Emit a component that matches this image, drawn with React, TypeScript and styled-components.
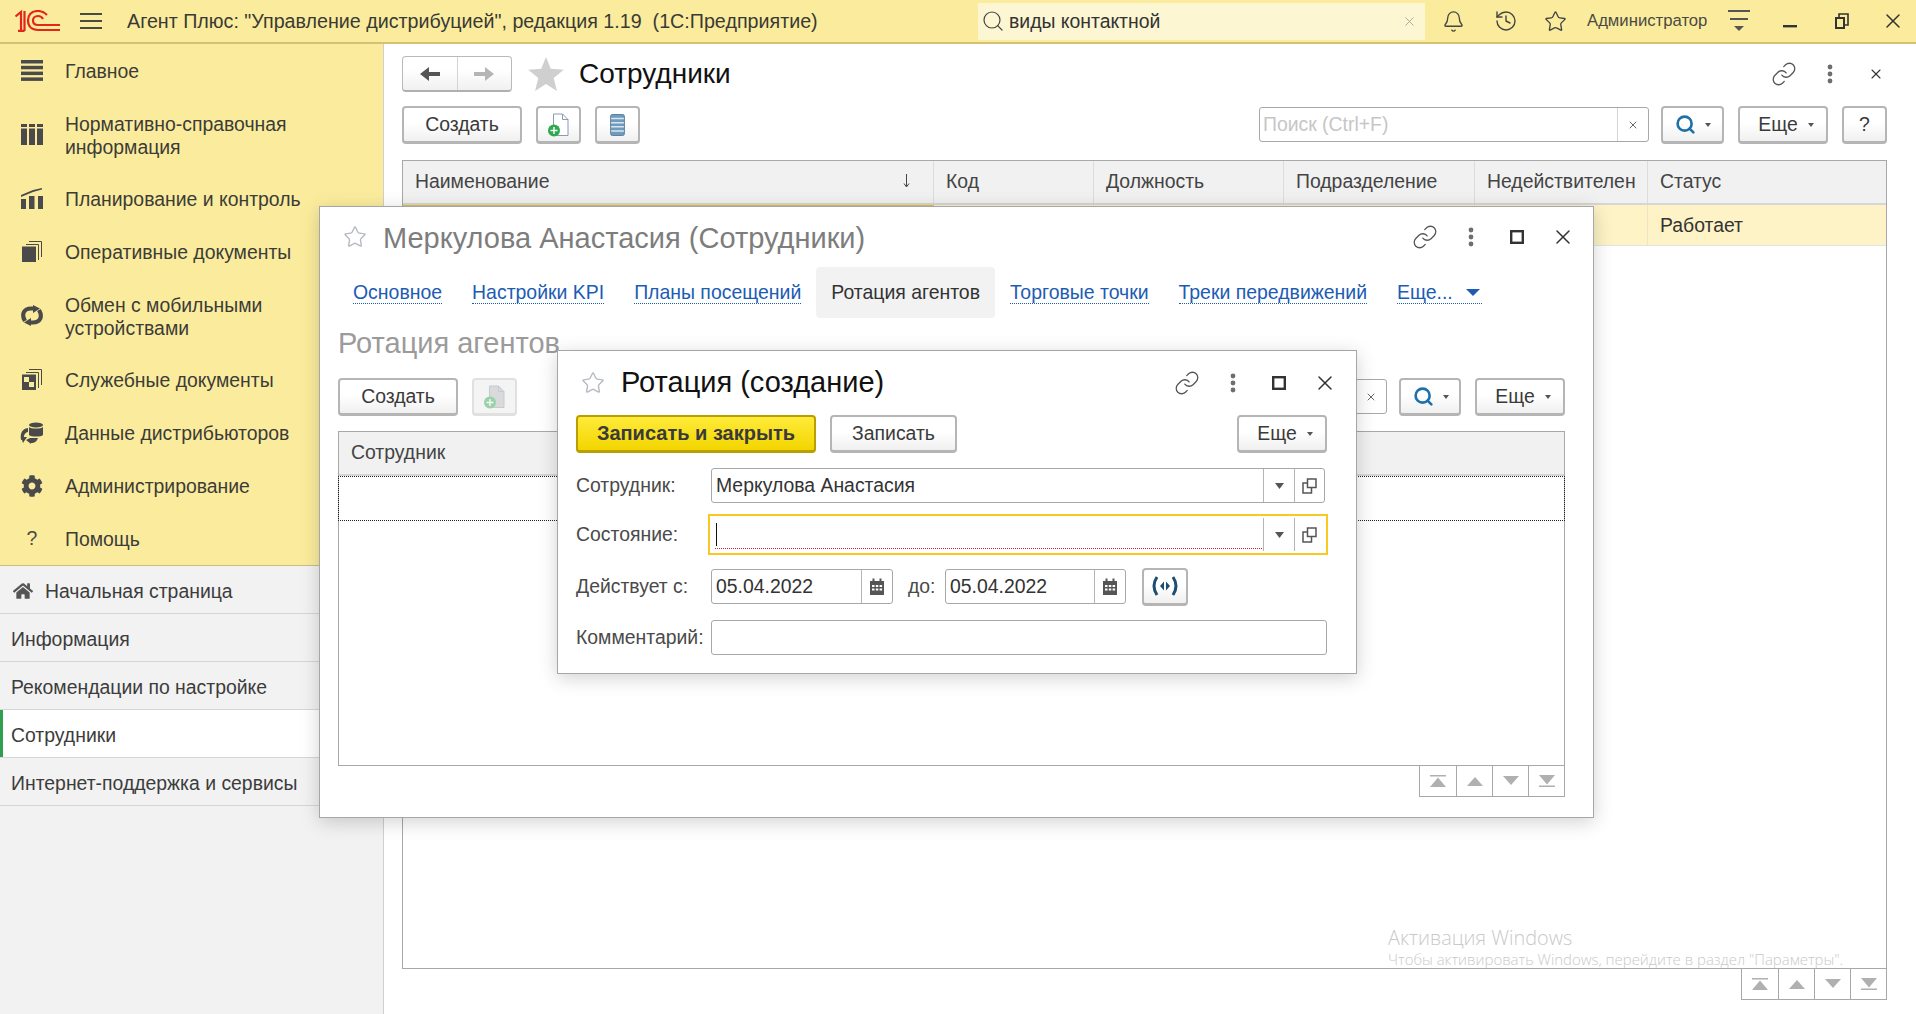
import React from 'react';
import styled, { createGlobalStyle } from 'styled-components';
import { Bell, History, Star, Link as LinkIcon, Search, X } from 'lucide-react';
import { FaCog, FaHome } from 'react-icons/fa';

const GlobalStyle = createGlobalStyle`
    html, body {
        margin: 0;
        padding: 0;
        background: #fff;
        overflow: hidden;
    }
    * {
        box-sizing: border-box;
    }
    #root {
        width: 1916px;
        height: 1014px;
    }
`;

const Page = styled.div`
    position: relative;
    width: 1916px;
    height: 1014px;
    overflow: hidden;
    display: flex;
    flex-direction: column;
    background: #fff;
    color: #333;
    font-family: "Liberation Sans", Arial, sans-serif;
    font-size: 19.4px;
`;

/* ---------- top bar ---------- */

const TopBar = styled.header`
    flex: 0 0 44px;
    display: flex;
    align-items: center;
    background: #fbec9d;
    border-bottom: 2px solid #d6c170;
    padding-left: 15px;
`;

const Burger = styled.div`
    width: 22px;
    height: 16px;
    margin-left: 20px;
    border-top: 2px solid #4a4a44;
    border-bottom: 2px solid #4a4a44;
    position: relative;
    &::after {
        content: "";
        position: absolute;
        left: 0;
        right: 0;
        top: 5px;
        height: 2px;
        background: #4a4a44;
    }
`;

const AppTitle = styled.div`
    flex: 0 0 876px;
    padding-left: 25px;
    white-space: pre;
    font-size: 19.7px;
    color: #3a3a34;
`;

const GlobalSearch = styled.div`
    flex: 0 0 447px;
    height: 37px;
    display: flex;
    align-items: center;
    background: #fdf6d2;
    padding: 0 8px 0 3px;
    gap: 4px;
    color: #333;
`;

const GlobalSearchText = styled.span`
    flex: 1;
`;

const TopSlot = styled.div<{ $w: number; $shift?: number }>`
    flex: 0 0 ${(p) => p.$w}px;
    padding-left: ${(p) => p.$shift ?? 0}px;
    display: flex;
    align-items: center;
    justify-content: center;
    color: #444;
`;

const UserName = styled.div`
    flex: 0 0 140px;
    padding-left: 8px;
    font-size: 16.7px;
    color: #4a4a44;
`;

/* ---------- side panel ---------- */

const Body = styled.div`
    flex: 1;
    display: flex;
    min-height: 0;
`;

const Side = styled.aside`
    flex: 0 0 384px;
    display: flex;
    flex-direction: column;
    background: #f2f2f2;
    border-right: 1px solid #cfcfcf;
`;

const SideMenu = styled.nav`
    background: #fbec9d;
    border-bottom: 1px solid #c9bd8a;
`;

const SideItem = styled.div<{ $tall?: boolean }>`
    height: ${(p) => (p.$tall ? 75 : 53)}px;
    display: flex;
    align-items: center;
    color: #3c3c38;
    line-height: 23px;
`;

const SideIcon = styled.div`
    flex: 0 0 65px;
    display: flex;
    justify-content: center;
    padding-right: 1px;
    color: #4a4a4a;
`;

const SideLabel = styled.div`
    padding-top: 2px;
`;

const OpenTab = styled.div<{ $active?: boolean }>`
    height: 48px;
    display: flex;
    align-items: center;
    gap: 12px;
    padding: 3px 0 0 11px;
    color: #3c3c3c;
    border-bottom: 1px solid #d6d6d6;
    background: ${(p) => (p.$active ? '#fff' : 'transparent')};
    box-shadow: ${(p) => (p.$active ? 'inset 3px 0 0 #2f9e4f' : 'none')};
`;

const HomeMark = styled.span`
    display: flex;
    margin-left: 2px;
    color: #555;
`;

/* ---------- main form ---------- */

const Main = styled.main`
    flex: 1;
    min-width: 0;
    display: flex;
    flex-direction: column;
    padding: 12px 29px 14px 18px;
`;

const FormHead = styled.div`
    display: flex;
    align-items: center;
    height: 36px;
`;

const NavGroup = styled.div`
    display: flex;
    width: 110px;
    height: 36px;
    border: 1px solid #b9b9b9;
    border-bottom: 2px solid #b0b0b0;
    border-radius: 4px;
    background: linear-gradient(#fff 40%, #f0f0f0);
`;

const NavCell = styled.div<{ $line?: boolean }>`
    flex: 1;
    display: flex;
    align-items: center;
    justify-content: center;
    border-left: ${(p) => (p.$line ? '1px solid #d4d4d4' : 'none')};
`;

const BigStar = styled.div`
    margin-left: 16px;
    width: 36px;
    display: flex;
    justify-content: center;
`;

const MainTitle = styled.div`
    margin-left: 15px;
    font-size: 28px;
    color: #111;
`;

const Controls = styled.div<{ $out: number }>`
    margin-left: auto;
    margin-right: -${(p) => p.$out}px;
    display: flex;
    align-items: center;
`;

const ControlSlot = styled.div`
    width: 46px;
    height: 30px;
    display: flex;
    align-items: center;
    justify-content: center;
    color: #555;
`;

const Toolbar = styled.div<{ $top: number }>`
    margin-top: ${(p) => p.$top}px;
    display: flex;
    align-items: center;
    gap: 14px;
    height: 38px;
`;

const Button = styled.div<{ $w: number; $primary?: boolean; $off?: boolean }>`
    flex: 0 0 ${(p) => p.$w}px;
    height: 38px;
    display: flex;
    align-items: center;
    justify-content: center;
    gap: 9px;
    border-radius: 4px;
    border: 2px solid ${(p) => (p.$primary ? '#b99f00' : p.$off ? '#e0e0e0' : '#b5b5b5')};
    border-bottom-width: 3px;
    background: ${(p) =>
        p.$primary
            ? 'linear-gradient(#ffeb3a, #f2d500)'
            : p.$off
              ? '#f4f4f4'
              : 'linear-gradient(#fff 45%, #f0f0f0)'};
    color: #3a3a3a;
    font-weight: ${(p) => (p.$primary ? 700 : 400)};
    font-size: ${(p) => (p.$primary ? 20 : 19.4)}px;
`;

const MoreButton = styled(Button)`
    padding-left: 6px;
    gap: 10px;
`;

const LensButton = styled(Button)`
    gap: 9px;
    padding-left: 1px;
`;

const Caret = styled.span`
    width: 0;
    height: 0;
    border-left: 3.5px solid transparent;
    border-right: 3.5px solid transparent;
    border-top: 4px solid #555;
`;

const ListSearch = styled.div<{ $w: number }>`
    flex: 0 0 ${(p) => p.$w}px;
    height: 35px;
    display: flex;
    align-items: center;
    border: 1px solid #a8a8a8;
    border-radius: 3px;
    background: #fff;
    color: #c6c6c6;
    margin: 0 -2px 1px 0;
`;

const ListSearchText = styled.div`
    flex: 1;
    padding-left: 3px;
`;

const ListSearchClear = styled.div`
    flex: 0 0 31px;
    height: 100%;
    display: flex;
    align-items: center;
    justify-content: center;
    border-left: 1px solid #d4d4d4;
    color: #555;
`;

const Spacer = styled.div`
    flex: 1;
`;

/* ---------- tables ---------- */

const Table = styled.div<{ $top: number }>`
    margin-top: ${(p) => p.$top}px;
    flex: 1;
    min-height: 0;
    border: 1px solid #a8a8a8;
    display: flex;
    flex-direction: column;
`;

const HeadRow = styled.div<{ $cols: string }>`
    flex: 0 0 44px;
    display: grid;
    grid-template-columns: ${(p) => p.$cols};
    background: #f1f1f1;
    border-bottom: 2px solid #d6d6d6;
`;

const HeadCell = styled.div`
    display: flex;
    align-items: center;
    justify-content: space-between;
    padding: 0 22px 2px 12px;
    border-right: 1px solid #dcdcdc;
    color: #444;
    white-space: nowrap;
    overflow: hidden;
    &:last-child {
        border-right: none;
    }
`;

const DataRow = styled.div<{ $cols: string }>`
    flex: 0 0 41px;
    display: grid;
    grid-template-columns: ${(p) => p.$cols};
    background: #fdf3c6;
    border-bottom: 1px solid #e4e4e4;
`;

const DataCell = styled.div`
    display: flex;
    align-items: center;
    padding: 0 12px;
    border-right: 1px solid #ece6c4;
    color: #333;
    &:first-child {
        border-top: 2px solid #e7bf3a;
    }
    &:last-child {
        border-right: none;
    }
`;

const EmptyRow = styled.div`
    flex: 0 0 45px;
    border: 1px dotted #222;
    margin: 0 -1px;
`;

const Pager = styled.div`
    align-self: flex-end;
    display: flex;
    height: 31px;
    border: 1px solid #a8a8a8;
    border-top: none;
    background: #fff;
`;

const PagerCell = styled.div`
    width: 36px;
    display: flex;
    align-items: center;
    justify-content: center;
    border-left: 1px solid #a8a8a8;
    &:first-child {
        border-left: none;
    }
`;

/* ---------- floating windows ---------- */

const Win = styled.section<{ $x: number; $y: number; $w: number; $h: number; $pad: number; $padR: number }>`
    position: absolute;
    left: ${(p) => p.$x}px;
    top: ${(p) => p.$y}px;
    width: ${(p) => p.$w}px;
    height: ${(p) => p.$h}px;
    padding: 0 ${(p) => p.$padR}px 20px ${(p) => p.$pad}px;
    display: flex;
    flex-direction: column;
    background: #fff;
    border: 1px solid #a6a6a6;
    box-shadow: 0 4px 18px rgba(0, 0, 0, 0.18);
`;

const WinHead = styled.div<{ $h: number }>`
    flex: 0 0 ${(p) => p.$h}px;
    display: flex;
    align-items: center;
`;

const WinTitle = styled.div<{ $dim?: boolean }>`
    font-size: 29px;
    margin-left: 16px;
    padding-top: ${(p) => (p.$dim ? 2 : 0)}px;
    color: ${(p) => (p.$dim ? '#7d7d7d' : '#111')};
    white-space: nowrap;
`;

const StarBox = styled.div`
    width: 24px;
    margin-left: 5px;
    display: flex;
    justify-content: center;
`;

const Tabs = styled.div`
    flex: 0 0 51px;
    display: flex;
    align-items: center;
    font-size: 19.45px;
`;

const Tab = styled.div<{ $active?: boolean }>`
    height: 51px;
    padding: 0 15px;
    display: flex;
    align-items: center;
    border-radius: 4px;
    white-space: nowrap;
    background: ${(p) => (p.$active ? '#f2f2f2' : 'transparent')};
    color: ${(p) => (p.$active ? '#333' : '#1c5cb4')};
`;

const TabLabel = styled.span`
    border-bottom: 1px dotted #1c5cb4;
    line-height: 21px;
    display: inline-flex;
    align-items: center;
`;

const MoreArrow = styled.span`
    margin-left: 13px;
    margin-right: 2px;
    width: 0;
    height: 0;
    border-left: 7px solid transparent;
    border-right: 7px solid transparent;
    border-top: 7px solid #1c5cb4;
`;

const Heading = styled.div`
    margin-top: 8px;
    font-size: 29px;
    line-height: 34px;
    color: #9b9b9b;
`;

const Form = styled.div`
    margin-top: 15px;
    display: flex;
    flex-direction: column;
`;

const FormRow = styled.div<{ $top: number }>`
    margin-top: ${(p) => p.$top}px;
    height: 35px;
    display: flex;
    align-items: center;
`;

const Label = styled.div<{ $w: number }>`
    flex: 0 0 ${(p) => p.$w}px;
    color: #4a4a4a;
    white-space: nowrap;
`;

const Field = styled.div<{ $w: number; $focus?: boolean }>`
    flex: 0 0 ${(p) => p.$w}px;
    height: 35px;
    display: flex;
    align-items: stretch;
    border: 1px solid ${(p) => (p.$focus ? 'transparent' : '#a8a8a8')};
    outline: ${(p) => (p.$focus ? '2px solid #f9c822' : 'none')};
    outline-offset: ${(p) => (p.$focus ? '1px' : '0')};
    border-radius: ${(p) => (p.$focus ? 0 : 3)}px;
`;

const FieldText = styled.div`
    flex: 1;
    display: flex;
    align-items: center;
    padding-left: 4px;
    color: #333;
`;

const EmptyInput = styled.div`
    flex: 1;
    margin: 2px 1px 2px 3px;
    border-bottom: 1px dotted #d2232a;
    display: flex;
    align-items: center;
`;

const TextCaret = styled.div`
    width: 1px;
    height: 23px;
    background: #111;
    margin-left: 1px;
`;

const FieldCell = styled.div<{ $w: number }>`
    flex: 0 0 ${(p) => p.$w}px;
    display: flex;
    align-items: center;
    justify-content: center;
    border-left: 1px solid #b5b5b5;
`;

const ToLabel = styled.div`
    flex: 0 0 52px;
    padding-left: 15px;
    color: #4a4a4a;
`;

const WideGap = styled.div`
    width: 16px;
`;

const Watermark = styled.div`
    position: absolute;
    left: 1388px;
    top: 925px;
    color: #c9c9c9;
    font-family: "Open Sans", sans-serif;
    pointer-events: none;
`;

const WatermarkTitle = styled.div`
    font-size: 19.9px;
    line-height: 26px;
    font-weight: 300;
`;

const WatermarkNote = styled.div`
    font-size: 14.95px;
    line-height: 16px;
    font-weight: 300;
    white-space: nowrap;
`;

/* ---------- drawings ---------- */

const Logo = () => (
    <svg width="45" height="22" viewBox="0 0 45 22" fill="none" stroke="#e2261c" strokeWidth="2.2">
        <path d="M0.5 6.5 L6 2 V21 M3 20.8 H9.5 M9.5 21 V1" />
        <path d="M32 5 C29 2 26 1 23 1 C16 1 13 5 13 10.5 C13 16.5 17 20 23 20 H45" />
        <path d="M28 9 C27 7 25 6 23 6 C20 6 18 8 18 10.5 C18 13.5 20 15 23 15 H45" />
    </svg>
);

const Bars = () => (
    <svg width="22" height="21" viewBox="0 0 22 21" fill="#4a4a4a">
        <rect y="0" width="22" height="3.5" />
        <rect y="5.8" width="22" height="3.5" />
        <rect y="11.6" width="22" height="3.5" />
        <rect y="17.4" width="22" height="3.5" />
    </svg>
);

const Columns = () => (
    <svg width="22" height="21" viewBox="0 0 22 21" fill="#4a4a4a">
        <rect width="6" height="3" />
        <rect x="8" width="6" height="3" />
        <rect x="16" width="6" height="3" />
        <rect y="4.5" width="6" height="16.5" />
        <rect x="8" y="4.5" width="6" height="16.5" />
        <rect x="16" y="4.5" width="6" height="16.5" />
    </svg>
);

const Chart = () => (
    <svg width="22" height="21" viewBox="0 0 22 21" fill="#4a4a4a">
        <rect y="11" width="5" height="10" />
        <rect x="8" y="8" width="5.5" height="13" />
        <rect x="17" y="8" width="5" height="13" />
        <path d="M0 7 L12 2 L21 0 L21 1.5 L12 4 L0 9 Z" />
    </svg>
);

const Docs = ({ squares }: { squares?: boolean }) => (
    <svg width="20" height="21" viewBox="0 0 20 21">
        <path d="M7 0.5 H19.5 V16 M4 3.5 H16.5 V19" fill="none" stroke="#4a4a4a" />
        <rect x="0" y="5.5" width="14" height="15.5" fill="#4a4a4a" />
        {squares && <rect x="2" y="8" width="5" height="5" fill="#fbec9d" />}
        {squares && <rect x="7" y="13" width="5" height="5" fill="#fbec9d" />}
    </svg>
);

const Sync = () => (
    <svg width="22" height="21" viewBox="0 0 22 21" fill="none" stroke="#4a4a4a" strokeWidth="4.2">
        <path d="M4 16 C0 9 3 3.5 10 3.5 H13" />
        <path d="M18 5 C22 12 19 17.5 12 17.5 H9" />
        <path d="M12 0 L19 3.5 L12 8 Z M10 13 L3 17.5 L10 21 Z" fill="#4a4a4a" stroke="none" />
    </svg>
);

const Distrib = () => (
    <svg width="24" height="22" viewBox="0 0 24 22" fill="#4a4a4a">
        <ellipse cx="16" cy="3" rx="7" ry="2.6" />
        <path d="M9 5 C11 7 21 7 23 5 V13 C21 15 11 15 9 13 Z" />
        <path d="M8 6 C2 7 0 11 1 18 L4 17 C3.5 13 5 10.5 8 10 Z" />
        <path d="M1 15 L7 15 L3 21 Z" />
        <path d="M10 16 H18 C17 19 15 21 11 21 V22 L6 18 Z" />
    </svg>
);

const NewDoc = ({ off }: { off?: boolean }) => (
    <svg width="24" height="24" viewBox="0 0 24 24" opacity={off ? 0.45 : 1}>
        <path d="M6.5 1 H15.5 L21 6.5 V22.5 H6.5 Z" fill={off ? '#bbb' : '#fff'} stroke="#8a9bb0" />
        <path d="M15.5 1 V6.5 H21" fill="none" stroke="#8a9bb0" />
        <circle cx="7" cy="17.5" r="6" fill="#2fa84f" />
        <path d="M7 14 V21 M3.5 17.5 H10.5" stroke="#fff" strokeWidth="1.4" />
    </svg>
);

const Stack = () => (
    <svg width="15" height="22" viewBox="0 0 16 24">
        <rect x="0.5" y="0.5" width="15" height="23" rx="2" fill="#6f9cbc" stroke="#53789a" />
        <path d="M1 5 H15 M1 9.5 H15 M1 14 H15 M1 18.5 H15" stroke="#d9e6ef" strokeWidth="1.6" />
    </svg>
);

const Arrow = ({ dir, color }: { dir: 'left' | 'right'; color: string }) => (
    <svg width="20" height="16" viewBox="0 0 20 16" fill={color} transform={dir === 'left' ? 'scale(-1 1)' : undefined}>
        <path d="M0 6 H11 V1 L20 8 L11 15 V10 H0 Z" />
    </svg>
);

const SmallStar = () => <Star size={24} strokeWidth={1.4} color="#b4bac2" />;

const Dots = () => (
    <svg width="6" height="20" viewBox="0 0 6 20" fill="#6e6e6e">
        <circle cx="3" cy="3" r="2.4" />
        <circle cx="3" cy="10" r="2.4" />
        <circle cx="3" cy="17" r="2.4" />
    </svg>
);

const Maximize = () => (
    <svg width="14" height="14" viewBox="0 0 14 14" fill="none" stroke="#333" strokeWidth="2.4">
        <rect x="1.2" y="1.2" width="11.6" height="11.6" />
    </svg>
);

const Restore = () => (
    <svg width="14" height="16" viewBox="0 0 14 16" fill="none" stroke="#333" strokeWidth="2">
        <rect x="1" y="5" width="8" height="10" />
        <path d="M4 4 V1 H13 V12 H10" strokeWidth="1.6" />
    </svg>
);

const Calendar = () => (
    <svg width="14" height="17" viewBox="0 0 14 17" fill="#555">
        <path d="M0 3 H2.5 V0.5 H4.5 V3 H9.5 V0.5 H11.5 V3 H14 V17 H0 Z" />
        <g fill="#fff">
            <rect x="2" y="7" width="2.5" height="2" />
            <rect x="5.8" y="7" width="2.5" height="2" />
            <rect x="9.6" y="7" width="2.5" height="2" />
            <rect x="2" y="10.5" width="2.5" height="2" />
            <rect x="5.8" y="10.5" width="2.5" height="2" />
            <rect x="9.6" y="10.5" width="2.5" height="2" />
        </g>
    </svg>
);

const OpenCopy = () => (
    <svg width="15" height="16" viewBox="0 0 15 16" fill="none" stroke="#555" strokeWidth="1.5">
        <rect x="5.5" y="1" width="8.5" height="8.5" />
        <path d="M5.5 5 H1 V15 H9.5 V9.5" />
    </svg>
);

const DropTri = () => (
    <svg width="9" height="6" viewBox="0 0 9 6" fill="#555">
        <path d="M0 0 H9 L4.5 6 Z" />
    </svg>
);

const Period = () => (
    <svg width="26" height="20" viewBox="0 0 26 20" fill="none" stroke="#1c4e74" strokeWidth="3">
        <path d="M5 1 C1 7 1 13 5 19 M21 1 C25 7 25 13 21 19" />
        <path d="M12 5.5 V14.5 L8 10 Z M14 5.5 V14.5 L18 10 Z" fill="#1c4e74" stroke="none" />
    </svg>
);

const PagerIcon = ({ kind }: { kind: 'first' | 'up' | 'down' | 'last' }) => (
    <svg width="16" height="12" viewBox="0 0 16 12" fill="#b0b0b0">
        {kind === 'first' && <path d="M0 0 H16 V1.5 H0 Z M8 2.5 L16 12 H0 Z" />}
        {kind === 'up' && <path d="M8 2 L16 11 H0 Z" />}
        {kind === 'down' && <path d="M0 1 H16 L8 10 Z" />}
        {kind === 'last' && <path d="M0 0 H16 L8 9.5 Z M0 10.5 H16 V12 H0 Z" />}
    </svg>
);

const Pages = () => (
    <Pager>
        <PagerCell><PagerIcon kind="first" /></PagerCell>
        <PagerCell><PagerIcon kind="up" /></PagerCell>
        <PagerCell><PagerIcon kind="down" /></PagerCell>
        <PagerCell><PagerIcon kind="last" /></PagerCell>
    </Pager>
);

const Close = ({ size }: { size: number }) => <X size={size} strokeWidth={1.5} color="#333" />;

const WindowButtons = ({ out }: { out: number }) => (
    <Controls $out={out}>
        <ControlSlot><LinkIcon size={26} strokeWidth={1.2} /></ControlSlot>
        <ControlSlot><Dots /></ControlSlot>
        <ControlSlot><Maximize /></ControlSlot>
        <ControlSlot><Close size={24} /></ControlSlot>
    </Controls>
);

const BlueLens = () => <Search size={21} strokeWidth={3} color="#1f6fa8" />;

const menu = [
    { icon: <Bars />, label: 'Главное' },
    { icon: <Columns />, label: <>Нормативно-справочная<br />информация</>, tall: true },
    { icon: <Chart />, label: 'Планирование и контроль' },
    { icon: <Docs />, label: 'Оперативные документы' },
    { icon: <Sync />, label: <>Обмен с мобильными<br />устройствами</>, tall: true },
    { icon: <Docs squares />, label: 'Служебные документы' },
    { icon: <Distrib />, label: 'Данные дистрибьюторов' },
    { icon: <FaCog size={22} />, label: 'Администрирование' },
    { icon: <span>?</span>, label: 'Помощь' },
];

const MAIN_COLS = '531px 160px 190px 191px 173px 1fr';

const App: React.FC = () => {
    return (
        <Page>
            <GlobalStyle />
            <TopBar>
                <Logo />
                <Burger />
                <AppTitle>Агент Плюс: "Управление дистрибуцией", редакция 1.19  (1С:Предприятие)</AppTitle>
                <GlobalSearch>
                    <Search size={24} strokeWidth={1.2} color="#444" />
                    <GlobalSearchText>виды контактной</GlobalSearchText>
                    <X size={15} strokeWidth={1.3} color="#999" />
                </GlobalSearch>
                <TopSlot $w={56}><Bell size={23} strokeWidth={1.4} /></TopSlot>
                <TopSlot $w={50}><History size={24} strokeWidth={1.4} /></TopSlot>
                <TopSlot $w={48}><Star size={23} strokeWidth={1.4} /></TopSlot>
                <UserName>Администратор</UserName>
                <TopSlot $w={40}>
                    <svg width="22" height="24" viewBox="0 0 22 24" fill="#555">
                        <rect y="1" width="22" height="2" />
                        <rect x="2" y="9" width="18" height="2" />
                        <path d="M6 17 H16 L11 22 Z" />
                    </svg>
                </TopSlot>
                <TopSlot $w={62}>
                    <svg width="14" height="14" viewBox="0 0 14 14" fill="#333"><rect y="11" width="14" height="2.4" /></svg>
                </TopSlot>
                <TopSlot $w={42}><Restore /></TopSlot>
                <TopSlot $w={53} $shift={7}><Close size={24} /></TopSlot>
            </TopBar>

            <Body>
                <Side>
                    <SideMenu>
                        {menu.map((item, i) => (
                            <SideItem key={i} $tall={item.tall}>
                                <SideIcon>{item.icon}</SideIcon>
                                <SideLabel>{item.label}</SideLabel>
                            </SideItem>
                        ))}
                    </SideMenu>
                    <OpenTab><HomeMark><FaHome size={20} /></HomeMark>Начальная страница</OpenTab>
                    <OpenTab>Информация</OpenTab>
                    <OpenTab>Рекомендации по настройке</OpenTab>
                    <OpenTab $active>Сотрудники</OpenTab>
                    <OpenTab>Интернет-поддержка и сервисы</OpenTab>
                </Side>

                <Main>
                    <FormHead>
                        <NavGroup>
                            <NavCell><Arrow dir="left" color="#555" /></NavCell>
                            <NavCell $line><Arrow dir="right" color="#b5b5b5" /></NavCell>
                        </NavGroup>
                        <BigStar>
                            <svg width="36" height="34" viewBox="0 0 24 23" fill="#cfcfcf">
                                <path d="M12 0 L15.2 8 L24 8.7 L17.2 14.2 L19.4 23 L12 18.2 L4.6 23 L6.8 14.2 L0 8.7 L8.8 8 Z" />
                            </svg>
                        </BigStar>
                        <MainTitle>Сотрудники</MainTitle>
                        <Controls $out={12}>
                            <ControlSlot><LinkIcon size={26} strokeWidth={1.2} /></ControlSlot>
                            <ControlSlot><Dots /></ControlSlot>
                            <ControlSlot><X size={16} strokeWidth={1.6} color="#333" /></ControlSlot>
                        </Controls>
                    </FormHead>
                    <Toolbar $top={14}>
                        <Button $w={120}>Создать</Button>
                        <Button $w={45}><NewDoc /></Button>
                        <Button $w={45}><Stack /></Button>
                        <Spacer />
                        <ListSearch $w={390}>
                            <ListSearchText>Поиск (Ctrl+F)</ListSearchText>
                            <ListSearchClear><X size={12} strokeWidth={1.8} /></ListSearchClear>
                        </ListSearch>
                        <LensButton $w={63}><BlueLens /><Caret /></LensButton>
                        <MoreButton $w={90}>Еще<Caret /></MoreButton>
                        <Button $w={45}>?</Button>
                    </Toolbar>
                    <Table $top={16}>
                        <HeadRow $cols={MAIN_COLS}>
                            <HeadCell>
                                Наименование
                                <svg width="9" height="14" viewBox="0 0 9 14" fill="none" stroke="#444">
                                    <path d="M4.5 0 V12 M2 9.5 L4.5 13 L7 9.5" />
                                </svg>
                            </HeadCell>
                            <HeadCell>Код</HeadCell>
                            <HeadCell>Должность</HeadCell>
                            <HeadCell>Подразделение</HeadCell>
                            <HeadCell>Недействителен</HeadCell>
                            <HeadCell>Статус</HeadCell>
                        </HeadRow>
                        <DataRow $cols={MAIN_COLS}>
                            <DataCell />
                            <DataCell />
                            <DataCell />
                            <DataCell />
                            <DataCell />
                            <DataCell>Работает</DataCell>
                        </DataRow>
                    </Table>
                    <Pages />
                </Main>
            </Body>

            <Watermark>
                <WatermarkTitle>Активация Windows</WatermarkTitle>
                <WatermarkNote>Чтобы активировать Windows, перейдите в раздел "Параметры".</WatermarkNote>
            </Watermark>

            <Win $x={319} $y={206} $w={1275} $h={612} $pad={18} $padR={28}>
                <WinHead $h={60}>
                    <StarBox><SmallStar /></StarBox>
                    <WinTitle $dim>Меркулова Анастасия (Сотрудники)</WinTitle>
                    <WindowButtons out={21} />
                </WinHead>
                <Tabs>
                    <Tab><TabLabel>Основное</TabLabel></Tab>
                    <Tab><TabLabel>Настройки KPI</TabLabel></Tab>
                    <Tab><TabLabel>Планы посещений</TabLabel></Tab>
                    <Tab $active>Ротация агентов</Tab>
                    <Tab><TabLabel>Торговые точки</TabLabel></Tab>
                    <Tab><TabLabel>Треки передвижений</TabLabel></Tab>
                    <Tab><TabLabel>Еще...<MoreArrow /></TabLabel></Tab>
                </Tabs>
                <Heading>Ротация агентов</Heading>
                <Toolbar $top={18}>
                    <Button $w={120}>Создать</Button>
                    <Button $w={45} $off><NewDoc off /></Button>
                    <Spacer />
                    <ListSearch $w={390}>
                        <ListSearchText />
                        <ListSearchClear><X size={12} strokeWidth={1.8} /></ListSearchClear>
                    </ListSearch>
                    <LensButton $w={62}><BlueLens /><Caret /></LensButton>
                    <MoreButton $w={90}>Еще<Caret /></MoreButton>
                </Toolbar>
                <Table $top={15}>
                    <HeadRow $cols="1fr"><HeadCell>Сотрудник</HeadCell></HeadRow>
                    <EmptyRow />
                </Table>
                <Pages />
            </Win>

            <Win $x={557} $y={350} $w={800} $h={324} $pad={18} $padR={29}>
                <WinHead $h={63}>
                    <StarBox><SmallStar /></StarBox>
                    <WinTitle>Ротация (создание)</WinTitle>
                    <WindowButtons out={21} />
                </WinHead>
                <Toolbar $top={1}>
                    <Button $w={240} $primary>Записать и закрыть</Button>
                    <Button $w={127}>Записать</Button>
                    <Spacer />
                    <MoreButton $w={90}>Еще<Caret /></MoreButton>
                </Toolbar>
                <Form>
                    <FormRow $top={0}>
                        <Label $w={135}>Сотрудник:</Label>
                        <Field $w={614}>
                            <FieldText>Меркулова Анастасия</FieldText>
                            <FieldCell $w={31}><DropTri /></FieldCell>
                            <FieldCell $w={30}><OpenCopy /></FieldCell>
                        </Field>
                    </FormRow>
                    <FormRow $top={14}>
                        <Label $w={135}>Состояние:</Label>
                        <Field $w={614} $focus>
                            <EmptyInput><TextCaret /></EmptyInput>
                            <FieldCell $w={31}><DropTri /></FieldCell>
                            <FieldCell $w={30}><OpenCopy /></FieldCell>
                        </Field>
                    </FormRow>
                    <FormRow $top={17}>
                        <Label $w={135}>Действует с:</Label>
                        <Field $w={182}>
                            <FieldText>05.04.2022</FieldText>
                            <FieldCell $w={31}><Calendar /></FieldCell>
                        </Field>
                        <ToLabel>до:</ToLabel>
                        <Field $w={181}>
                            <FieldText>05.04.2022</FieldText>
                            <FieldCell $w={31}><Calendar /></FieldCell>
                        </Field>
                        <WideGap />
                        <Button $w={46}><Period /></Button>
                    </FormRow>
                    <FormRow $top={16}>
                        <Label $w={135}>Комментарий:</Label>
                        <Field $w={616} />
                    </FormRow>
                </Form>
            </Win>
        </Page>
    );
};

export default App;
